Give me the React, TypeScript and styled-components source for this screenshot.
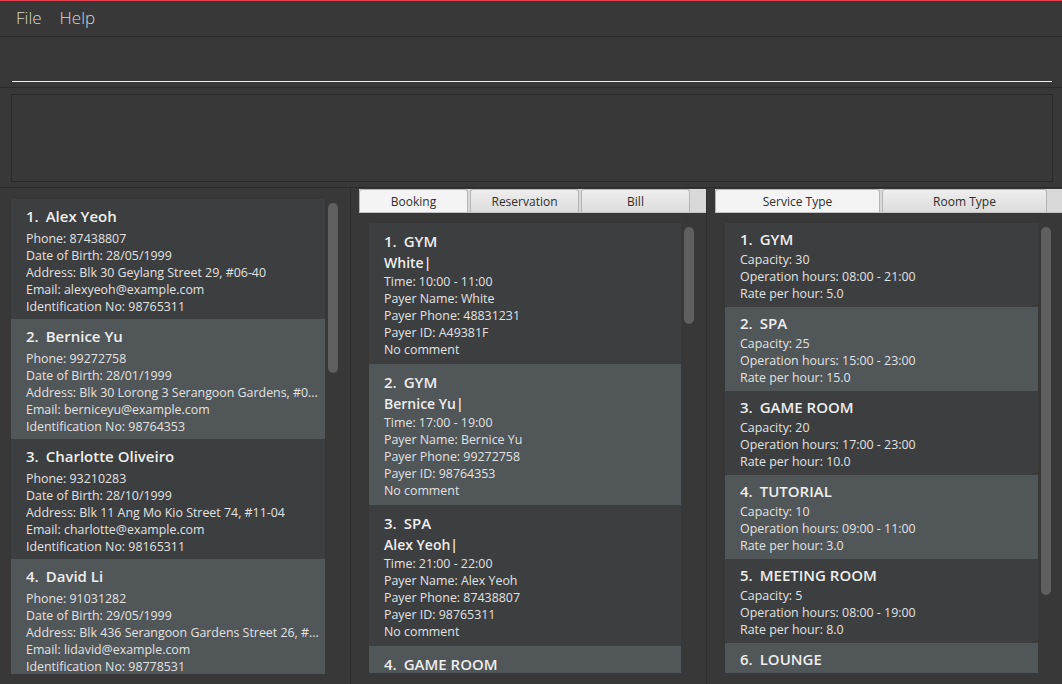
import styled, { createGlobalStyle } from "styled-components";

const GlobalStyle = createGlobalStyle`
  html, body {
    margin: 0;
    padding: 0;
    background: #383838;
  }
  body {
    font-family: "Open Sans", "Noto Sans", sans-serif;
  }
  * {
    box-sizing: border-box;
  }
`;

const Window = styled.div`
  width: 1062px;
  height: 684px;
  display: flex;
  flex-direction: column;
  overflow: hidden;
  background: #383838;
  border-top: 1px solid #e4404f;
`;

const MenuBar = styled.div`
  height: 36px;
  flex-shrink: 0;
  display: flex;
  align-items: center;
  gap: 18px;
  padding: 0 0 2px 16px;
  border-bottom: 1px solid #2b2b2b;
`;

const MenuItem = styled.span`
  font-size: 17px;
  font-weight: 300;
  color: #d6d6d6;
`;

const CommandPane = styled.div`
  height: 51px;
  flex-shrink: 0;
  padding: 8px 10px 0 12px;
  border-bottom: 1px solid #2b2b2b;
`;

const CommandInput = styled.div`
  height: 37px;
  border-bottom: 1px solid #f2f2f2;
`;

const ResultPane = styled.div`
  height: 100px;
  flex-shrink: 0;
  padding: 6px 9px 5px 11px;
  border-bottom: 1px solid #2b2b2b;
`;

const ResultBox = styled.div`
  height: 100%;
  border: 1px solid #2a2a2a;
  background: #383838;
`;

const Columns = styled.div`
  flex: 1;
  min-height: 0;
  display: grid;
  grid-template-columns: 350px 356px 356px;
`;

const Column = styled.div<{ $divided?: boolean }>`
  display: flex;
  flex-direction: column;
  min-height: 0;
  border-left: ${(p) => (p.$divided ? "1px solid #2e2e2e" : "none")};
`;

const LeftColumn = styled(Column)`
  padding: 11px 0 10px 11px;
`;

const TabColumn = styled(Column)`
  padding: 1px 0 0 8px;
`;

const TabHeader = styled.div`
  height: 24px;
  flex-shrink: 0;
  display: flex;
  align-items: flex-end;
  gap: 2px;
  background: #d9d9d9;
  border-bottom: 1px solid #c4c4c4;
`;

const Tab = styled.div<{ $width: number; $selected?: boolean }>`
  width: ${(p) => p.$width}px;
  height: 23px;
  display: flex;
  align-items: center;
  justify-content: center;
  border: 1px solid #b4b4b4;
  border-bottom: none;
  border-radius: 3px 3px 0 0;
  background: ${(p) =>
    p.$selected ? "#f4f4f4" : "linear-gradient(#eeeeee, #dcdcdc)"};
  font-size: 12px;
  color: #2e2e2e;
`;

const TabContent = styled.div`
  flex: 1;
  min-height: 0;
  display: flex;
  flex-direction: column;
  padding: 10px 0 11px 10px;
`;

const ListRow = styled.div`
  flex: 1;
  min-height: 0;
  display: flex;
  gap: 3px;
`;

const CardList = styled.div<{ $width: number }>`
  width: ${(p) => p.$width}px;
  flex-shrink: 0;
  overflow: hidden;
  display: flex;
  flex-direction: column;
`;

const ScrollTrack = styled.div`
  width: 10px;
  padding-top: 4px;
`;

const ScrollThumb = styled.div<{ $height: number }>`
  height: ${(p) => p.$height}px;
  border-radius: 5px;
  background: #5f5f5f;
`;

const Card = styled.div<{ $odd: boolean; $pad: string }>`
  flex-shrink: 0;
  padding: ${(p) => p.$pad};
  padding-left: 15px;
  padding-right: 3px;
  background: ${(p) => (p.$odd ? "#515658" : "#3c3e3f")};
`;

const Title = styled.div<{ $gap?: number }>`
  height: 24px;
  line-height: 24px;
  margin-bottom: ${(p) => p.$gap ?? 0}px;
  font-size: 15px;
  font-weight: 600;
  color: #eeeeee;
  white-space: nowrap;
`;

const Index = styled.span`
  margin-right: 7px;
`;

const Payer = styled.div`
  height: 20px;
  line-height: 20px;
  font-size: 14px;
  font-weight: 600;
  color: #eeeeee;
`;

const Line = styled.div`
  height: 17px;
  line-height: 17px;
  font-size: 12.4px;
  color: #e2e2e2;
  white-space: nowrap;
`;

const persons = [
  {
    name: "Alex Yeoh",
    lines: [
      "Phone: 87438807",
      "Date of Birth: 28/05/1999",
      "Address: Blk 30 Geylang Street 29, #06-40",
      "Email: alexyeoh@example.com",
      "Identification No: 98765311",
    ],
  },
  {
    name: "Bernice Yu",
    lines: [
      "Phone: 99272758",
      "Date of Birth: 28/01/1999",
      "Address: Blk 30 Lorong 3 Serangoon Gardens, #0...",
      "Email: berniceyu@example.com",
      "Identification No: 98764353",
    ],
  },
  {
    name: "Charlotte Oliveiro",
    lines: [
      "Phone: 93210283",
      "Date of Birth: 28/10/1999",
      "Address: Blk 11 Ang Mo Kio Street 74, #11-04",
      "Email: charlotte@example.com",
      "Identification No: 98165311",
    ],
  },
  {
    name: "David Li",
    lines: [
      "Phone: 91031282",
      "Date of Birth: 29/05/1999",
      "Address: Blk 436 Serangoon Gardens Street 26, #...",
      "Email: lidavid@example.com",
      "Identification No: 98778531",
    ],
  },
];

const bookings = [
  {
    service: "GYM",
    payer: "White|",
    lines: [
      "Time: 10:00 - 11:00",
      "Payer Name: White",
      "Payer Phone: 48831231",
      "Payer ID: A49381F",
      "No comment",
    ],
  },
  {
    service: "GYM",
    payer: "Bernice Yu|",
    lines: [
      "Time: 17:00 - 19:00",
      "Payer Name: Bernice Yu",
      "Payer Phone: 99272758",
      "Payer ID: 98764353",
      "No comment",
    ],
  },
  {
    service: "SPA",
    payer: "Alex Yeoh|",
    lines: [
      "Time: 21:00 - 22:00",
      "Payer Name: Alex Yeoh",
      "Payer Phone: 87438807",
      "Payer ID: 98765311",
      "No comment",
    ],
  },
  { service: "GAME ROOM", payer: "", lines: [] as string[] },
];

const services = [
  { name: "GYM", capacity: 30, hours: "08:00 - 21:00", rate: "5.0" },
  { name: "SPA", capacity: 25, hours: "15:00 - 23:00", rate: "15.0" },
  { name: "GAME ROOM", capacity: 20, hours: "17:00 - 23:00", rate: "10.0" },
  { name: "TUTORIAL", capacity: 10, hours: "09:00 - 11:00", rate: "3.0" },
  { name: "MEETING ROOM", capacity: 5, hours: "08:00 - 19:00", rate: "8.0" },
  { name: "LOUNGE", capacity: 0, hours: "", rate: "" },
];

const App = () => {
  return (
    <>
      <GlobalStyle />
      <Window>
        <MenuBar>
          <MenuItem>File</MenuItem>
          <MenuItem>Help</MenuItem>
        </MenuBar>
        <CommandPane>
          <CommandInput />
        </CommandPane>
        <ResultPane>
          <ResultBox />
        </ResultPane>
        <Columns>
          <LeftColumn>
            <ListRow>
              <CardList $width={314}>
                {persons.map((p, i) => (
                  <Card key={p.name} $odd={i % 2 === 1} $pad="5px 0 4px">
                    <Title $gap={2}>
                      <Index>{i + 1}.</Index>
                      {p.name}
                    </Title>
                    {p.lines.map((l) => (
                      <Line key={l}>{l}</Line>
                    ))}
                  </Card>
                ))}
              </CardList>
              <ScrollTrack>
                <ScrollThumb $height={170} />
              </ScrollTrack>
            </ListRow>
          </LeftColumn>

          <TabColumn $divided>
            <TabHeader>
              <Tab $width={109} $selected>
                Booking
              </Tab>
              <Tab $width={109}>Reservation</Tab>
              <Tab $width={109}>Bill</Tab>
            </TabHeader>
            <TabContent>
              <ListRow>
                <CardList $width={312}>
                  {bookings.map((b, i) => (
                    <Card key={i} $odd={i % 2 === 1} $pad="6px 0 6px">
                      <Title>
                        <Index>{i + 1}.</Index>
                        {b.service}
                      </Title>
                      {b.payer && <Payer>{b.payer}</Payer>}
                      {b.lines.map((l) => (
                        <Line key={l}>{l}</Line>
                      ))}
                    </Card>
                  ))}
                </CardList>
                <ScrollTrack>
                  <ScrollThumb $height={97} />
                </ScrollTrack>
              </ListRow>
            </TabContent>
          </TabColumn>

          <TabColumn $divided>
            <TabHeader>
              <Tab $width={165} $selected>
                Service Type
              </Tab>
              <Tab $width={165}>Room Type</Tab>
            </TabHeader>
            <TabContent>
              <ListRow>
                <CardList $width={313}>
                  {services.map((s, i) => (
                    <Card key={s.name} $odd={i % 2 === 1} $pad="4px 0 5px">
                      <Title>
                        <Index>{i + 1}.</Index>
                        {s.name}
                      </Title>
                      {s.hours && (
                        <>
                          <Line>Capacity: {s.capacity}</Line>
                          <Line>Operation hours: {s.hours}</Line>
                          <Line>Rate per hour: {s.rate}</Line>
                        </>
                      )}
                    </Card>
                  ))}
                </CardList>
                <ScrollTrack>
                  <ScrollThumb $height={368} />
                </ScrollTrack>
              </ListRow>
            </TabContent>
          </TabColumn>
        </Columns>
      </Window>
    </>
  );
};

export default App;
